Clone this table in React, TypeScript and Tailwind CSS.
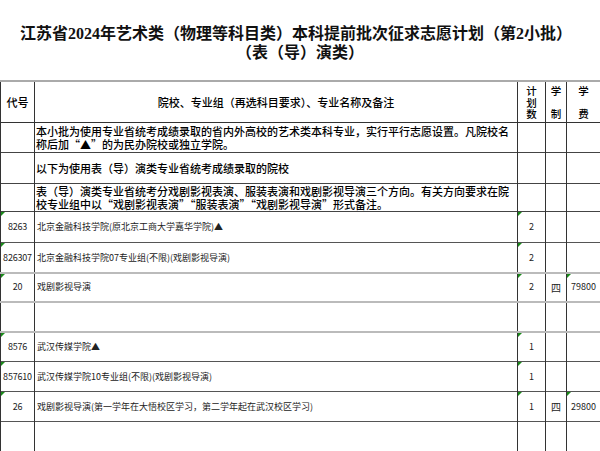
import React from "react";

const cjk = "font-['Liberation_Serif','Noto_Sans_CJK_SC',serif]";
const sans = "font-['Noto_Sans_CJK_SC','Liberation_Sans',sans-serif]";

type Row = {
  code: string;
  name: string;
  plan?: string;
  years?: string;
  fee?: string;
  h: string;
  line: "dark" | "light";
  markCode?: boolean;
  markPlan?: boolean;
  markFee?: boolean;
};

const rows: Row[] = [
  { code: "8263", name: "北京金融科技学院(原北京工商大学嘉华学院)▲", plan: "2", h: "h-[31px]", line: "dark", markCode: true, markPlan: true },
  { code: "826307", name: "北京金融科技学院07专业组(不限)(戏剧影视导演)", plan: "2", h: "h-[30px]", line: "light", markCode: true, markPlan: true },
  { code: "20", name: "戏剧影视导演", plan: "2", years: "四", fee: "79800", h: "h-[29px]", line: "light", markCode: true, markPlan: true, markFee: true },
  { code: "", name: "", h: "h-[30px]", line: "light" },
  { code: "8576", name: "武汉传媒学院▲", plan: "1", h: "h-[30px]", line: "dark", markCode: true, markPlan: true },
  { code: "857610", name: "武汉传媒学院10专业组(不限)(戏剧影视导演)", plan: "1", h: "h-[30px]", line: "dark", markCode: true, markPlan: true },
  { code: "26", name: "戏剧影视导演(第一学年在大悟校区学习，第二学年起在武汉校区学习)", plan: "1", years: "四", fee: "29800", h: "h-[30px]", line: "dark", markCode: true, markPlan: true, markFee: true },
  { code: "", name: "", h: "h-[30px]", line: "dark" },
];

function Mark() {
  return (
    <span className="absolute left-0 top-0 h-0 w-0 border-l-[4px] border-b-[4px] border-l-[#1a8a1a] border-b-transparent" />
  );
}

function Notice({ children, h }: { children: React.ReactNode; h: string }) {
  return (
    <tr className={`${h} border-b border-[#444]`}>
      <td className="border-x border-[#333]" />
      <td className={`border-r border-[#333] px-[1px] align-middle text-[11px] leading-[13px] font-medium text-black ${sans}`}>
        {children}
      </td>
      <td className="border-r border-[#333]" />
      <td className="border-r border-[#333]" />
      <td className="border-r border-[#333]" />
    </tr>
  );
}

export default function App() {
  return (
    <div className="h-[451px] w-[600px] overflow-hidden bg-white">
      <div className={`pt-[24px] text-center text-[16px] font-bold leading-[19px] text-[#111] ${cjk}`}>
        <div className="pr-[8px]">江苏省2024年艺术类（物理等科目类）本科提前批次征求志愿计划（第2小批）</div>
        <div>（表（导）演类）</div>
      </div>
      <table className="mt-[18px] w-[600px] table-fixed border-collapse">
        <colgroup>
          <col className="w-[34px]" />
          <col className="w-[483px]" />
          <col className="w-[28px]" />
          <col className="w-[21px]" />
          <col className="w-[34px]" />
        </colgroup>
        <tbody>
          <tr className={`h-[41px] border-t-2 border-t-[#aaa] border-b border-b-[#333] text-[11px] font-medium text-black ${sans}`}>
            <td className="border-x border-[#333] text-center">代号</td>
            <td className="border-r border-[#333] text-center">院校、专业组（再选科目要求）、专业名称及备注</td>
            <td className="border-r border-[#333] py-[3px] text-center text-[10.5px]">
              <div className="flex h-[34px] flex-col justify-between leading-[11px]">
                <span>计</span>
                <span>划</span>
                <span>数</span>
              </div>
            </td>
            <td className="border-r border-[#333] py-[3px] text-center text-[10.5px]">
              <div className="flex h-[34px] flex-col justify-between leading-[11px]">
                <span>学</span>
                <span>制</span>
              </div>
            </td>
            <td className="border-r border-[#333] py-[3px] text-center text-[10.5px]">
              <div className="flex h-[34px] flex-col justify-between leading-[11px]">
                <span>学</span>
                <span>费</span>
              </div>
            </td>
          </tr>
          <Notice h="h-[30px]">
            本小批为使用专业省统考成绩录取的省内外高校的艺术类本科专业，实行平行志愿设置。凡院校名称后加“▲”的为民办院校或独立学院。
          </Notice>
          <Notice h="h-[31px]">以下为使用表（导）演类专业省统考成绩录取的院校</Notice>
          <Notice h="h-[28px]">
            表（导）演类专业省统考分戏剧影视表演、服装表演和戏剧影视导演三个方向。有关方向要求在院校专业组中以“戏剧影视表演”“服装表演”“戏剧影视导演”形式备注。
          </Notice>
          {rows.map((r, i) => (
            <tr
              key={i}
              className={`${r.h} ${r.line === "light" ? "border-b-2 border-b-[#bbb]" : "border-b border-b-[#555]"} text-[9px] text-[#222] ${sans}`}
            >
              <td className="relative border-x border-[#333] text-center tracking-[-0.2px]">
                {r.markCode && <Mark />}
                {r.code}
              </td>
              <td className="border-r border-[#333] whitespace-nowrap pl-[2px]">{r.name}</td>
              <td className="relative border-r border-[#333] text-center">
                {r.markPlan && <Mark />}
                {r.plan}
              </td>
              <td className="border-r border-[#333] text-center text-[10px]">{r.years}</td>
              <td className="relative border-r border-[#333] text-center">
                {r.markFee && <Mark />}
                {r.fee}
              </td>
            </tr>
          ))}
        </tbody>
      </table>
    </div>
  );
}
